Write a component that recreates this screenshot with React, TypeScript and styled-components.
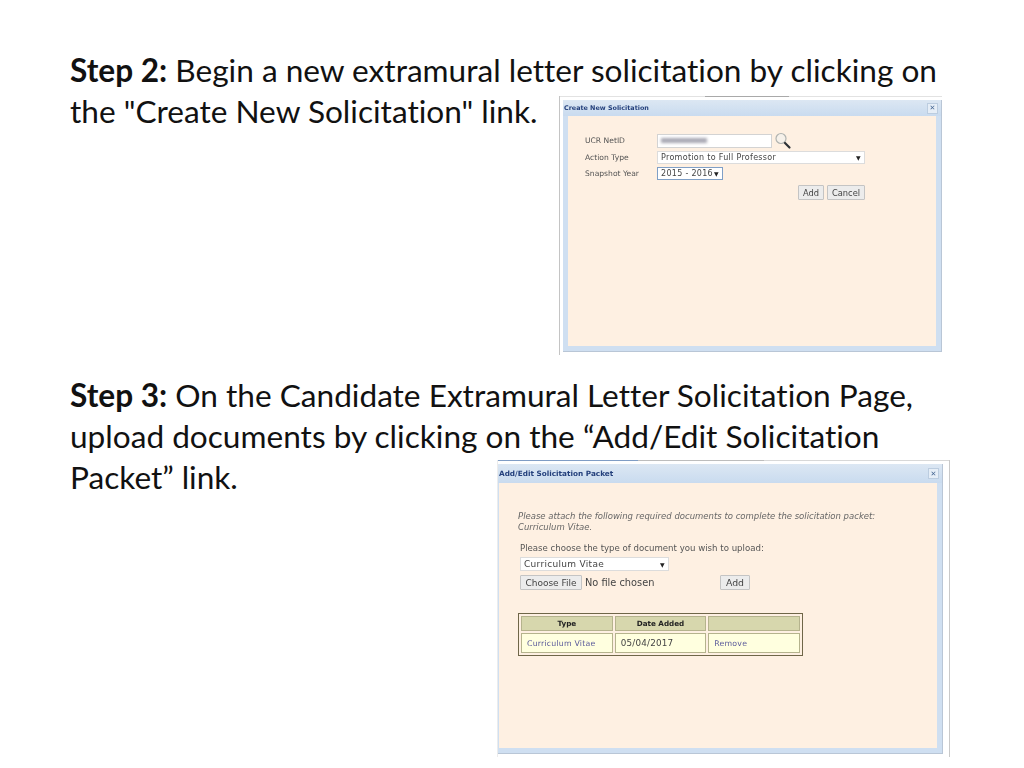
import React from "react";
import styled, { createGlobalStyle } from "styled-components";

const Global = createGlobalStyle`
  html, body {
    margin: 0;
    padding: 0;
    background: #fff;
  }
`;

const SearchIcon = () => (
  <svg width="18" height="18" viewBox="0 0 18 18">
    <circle cx="7" cy="6.5" r="5" fill="#f6f1ea" stroke="#b0b3b0" strokeWidth="1.2" />
    <path d="M11 11 L15.5 15.5" stroke="#2c3136" strokeWidth="2.2" strokeLinecap="round" />
  </svg>
);

const App = () => {
  return (
    <Page>
      <Global />
      <Section>
        <Line>
          <b>Step 2:</b> Begin a new extramural letter solicitation by clicking on
        </Line>
        <Row>
          <Line>the "Create New Solicitation" link.</Line>
          <Frame
            $right={81}
            $w={384}
            $top={5}
            $rule="linear-gradient(90deg, #e2e2e2 0 38%, #a9a9a9 38% 60%, #e2e2e2 60% 100%)"
          >
            <Window $h={252} $w={379} $ml={3}>
              <Header $h={16}>
                <Title $size={6.4}>Create New Solicitation</Title>
                <Close>✕</Close>
              </Header>
              <Body $left={5} $right={5}>
                <Form>
                  <Label>UCR NetID</Label>
                  <SearchRow>
                    <NetInput>
                      <Redacted />
                    </NetInput>
                    <SearchIcon />
                  </SearchRow>
                  <Label>Action Type</Label>
                  <Select $w={208}>
                    Promotion to Full Professor<Arrow>▼</Arrow>
                  </Select>
                  <Label>Snapshot Year</Label>
                  <Select $w={66} $focus>
                    2015 - 2016<Arrow>▼</Arrow>
                  </Select>
                </Form>
                <Buttons>
                  <Btn $w={26} $size={8.3}>Add</Btn>
                  <Btn $w={38} $size={8.3}>Cancel</Btn>
                </Buttons>
              </Body>
            </Window>
          </Frame>
        </Row>
      </Section>
      <Section $top={20}>
        <Line>
          <b>Step 3:</b> On the Candidate Extramural Letter Solicitation Page,
        </Line>
        <Line>upload documents by clicking on the “Add/Edit Solicitation</Line>
        <Row>
          <Line>Packet” link.</Line>
          <Frame
            $right={74}
            $w={453}
            $top={3}
            $closed
            $rule="linear-gradient(90deg, #7f9cc4 0 31%, #bdbdbd 31% 59%, #d8d8d8 59% 100%)"
          >
            <Window $h={290} $w={445} $ml={0}>
              <Header $h={19}>
                <Title $size={7.3}>Add/Edit Solicitation Packet</Title>
                <Close>✕</Close>
              </Header>
              <Body $left={1} $right={5}>
                <Packet>
                  <Note>
                    Please attach the following required documents to complete the solicitation packet:
                    <br />
                    Curriculum Vitae.
                  </Note>
                  <Upload>
                    <UploadLabel>Please choose the type of document you wish to upload:</UploadLabel>
                    <Select $w={149}>
                      Curriculum Vitae<Arrow>▼</Arrow>
                    </Select>
                    <FileRow>
                      <Btn $w={62} $size={9}>Choose File</Btn>
                      <FileName>No file chosen</FileName>
                      <Btn $w={30} $size={9.3}>Add</Btn>
                    </FileRow>
                  </Upload>
                  <DocTable>
                    <thead>
                      <tr>
                        <Th>Type</Th>
                        <Th>Date Added</Th>
                        <Th />
                      </tr>
                    </thead>
                    <tbody>
                      <tr>
                        <Td $link>Curriculum Vitae</Td>
                        <Td>05/04/2017</Td>
                        <Td $link>Remove</Td>
                      </tr>
                    </tbody>
                  </DocTable>
                </Packet>
              </Body>
            </Window>
          </Frame>
        </Row>
      </Section>
    </Page>
  );
};

export default App;

const Page = styled.div`
  width: 1024px;
  height: 768px;
  box-sizing: border-box;
  padding: 50px 0 0 70px;
  overflow: hidden;
  color: #111;
  font-family: "Lato", "Liberation Sans", sans-serif;
`;

const Section = styled.section<{ $top?: number }>`
  margin-top: ${({ $top }) => $top || 0}px;
`;

const Line = styled.div`
  font-size: 31.6px;
  line-height: 41px;
  font-variant-ligatures: none;
  white-space: nowrap;

  b {
    font-weight: 700;
  }
`;

const Row = styled.div`
  display: flex;
  justify-content: space-between;
  align-items: flex-start;
`;

const Frame = styled.div<{ $right: number; $w: number; $top: number; $closed?: boolean; $rule: string }>`
  width: ${({ $w }) => $w}px;
  margin-top: ${({ $top }) => $top}px;
  margin-right: ${({ $right }) => $right}px;
  padding: 4px 0 3px;
  box-sizing: border-box;
  background: ${({ $rule }) => $rule} top / 100% 1px no-repeat;
  border-left: 1px solid ${({ $closed }) => ($closed ? "#ececec" : "#c4c4c4")};
  border-right: 1px solid ${({ $closed }) => ($closed ? "#c9c9c9" : "transparent")};
  filter: blur(0.45px);
  font-family: "DejaVu Sans", "Liberation Sans", sans-serif;
`;

const Window = styled.div<{ $h: number; $w: number; $ml: number }>`
  width: ${({ $w }) => $w}px;
  height: ${({ $h }) => $h}px;
  margin-left: ${({ $ml }) => $ml}px;
  display: flex;
  flex-direction: column;
  box-sizing: border-box;
  background: #cfdff1;
  border-right: 1px solid #b9c6d6;
  border-bottom: 1px solid #b9c6d6;
`;

const Header = styled.div<{ $h: number }>`
  height: ${({ $h }) => $h}px;
  flex: none;
  display: flex;
  align-items: center;
  justify-content: space-between;
  padding: 0 3px 0 1px;
  background: linear-gradient(#dce7f3, #c9dbef);
`;

const Title = styled.div<{ $size: number }>`
  font-size: ${({ $size }) => $size}px;
  font-weight: 700;
  color: #24407c;
`;

const Close = styled.div`
  width: 9px;
  height: 9px;
  display: flex;
  align-items: center;
  justify-content: center;
  font-size: 7px;
  font-weight: 700;
  color: #4a6a96;
  background: #e6eef7;
  border: 1px solid #bccde0;
`;

const Body = styled.div<{ $left: number; $right: number }>`
  flex: 1;
  margin: 0 ${({ $right }) => $right}px 5px ${({ $left }) => $left}px;
  background: #fef0e2;
  font-size: 8px;
  color: #444;
`;

const Form = styled.div`
  display: grid;
  grid-template-columns: 72px 208px;
  align-items: center;
  justify-items: start;
  row-gap: 3px;
  margin: 17px 0 0 17px;
`;

const Label = styled.div`
  font-size: 7.6px;
  color: #555;
  white-space: nowrap;
`;

const UploadLabel = styled.div`
  font-size: 8.6px;
  color: #555;
  white-space: nowrap;
`;

const SearchRow = styled.div`
  display: flex;
  align-items: center;
  gap: 2px;
  height: 15px;
`;

const NetInput = styled.div`
  width: 115px;
  height: 14px;
  box-sizing: border-box;
  display: flex;
  align-items: center;
  padding-left: 3px;
  background: #fff;
  border: 1px solid #d3d3d3;
`;

const Redacted = styled.span`
  width: 46px;
  height: 5px;
  background: #a8a8b4;
  filter: blur(1.5px);
`;

const Select = styled.div<{ $w: number; $focus?: boolean }>`
  width: ${({ $w }) => $w}px;
  height: 13px;
  box-sizing: border-box;
  display: flex;
  align-items: center;
  justify-content: space-between;
  padding: 0 3px;
  font-size: 8px;
  letter-spacing: 0.3px;
  white-space: nowrap;
  color: #444;
  background: #fff;
  border: 1px solid ${({ $focus }) => ($focus ? "#7f9fc6" : "#dcdcdc")};
`;

const Arrow = styled.span`
  font-size: 6px;
  color: #222;
`;

const Buttons = styled.div`
  display: flex;
  justify-content: flex-end;
  gap: 3px;
  width: 280px;
  margin: 5px 0 0 17px;
`;

const Btn = styled.div<{ $w: number; $size: number }>`
  width: ${({ $w }) => $w}px;
  height: 15px;
  box-sizing: border-box;
  display: flex;
  align-items: center;
  justify-content: center;
  flex: none;
  font-size: ${({ $size }) => $size}px;
  white-space: nowrap;
  color: #444;
  background: #ececec;
  border: 1px solid #c4c4c4;
  border-radius: 1px;
`;

const Packet = styled.div`
  padding: 28px 0 0 19px;
`;

const Note = styled.div`
  font-size: 8.5px;
  line-height: 10.5px;
  font-style: italic;
  color: #666;
  white-space: nowrap;
`;

const Upload = styled.div`
  margin: 11px 0 0 2px;
  display: flex;
  flex-direction: column;
  align-items: flex-start;

  ${Select} {
    height: 14px;
    margin-top: 4px;
    font-size: 9px;
  }
`;

const FileRow = styled.div`
  display: flex;
  align-items: center;
  margin-top: 4px;
`;

const FileName = styled.div`
  width: 135px;
  padding-left: 3px;
  box-sizing: content-box;
  font-size: 9.8px;
  color: #444;
  white-space: nowrap;
`;

const DocTable = styled.table`
  width: 285px;
  margin-top: 23px;
  box-sizing: border-box;
  table-layout: fixed;
  border-collapse: separate;
  border-spacing: 2px;
  background: #fef0e2;
  border: 1px solid #6f6648;
`;

const Th = styled.th`
  height: 13px;
  padding: 0;
  font-size: 7.2px;
  color: #222;
  background: #d7d7ad;
  border: 1px solid #b5b38d;
`;

const Td = styled.td<{ $link?: boolean }>`
  height: 18px;
  padding: 0 0 0 5px;
  font-size: ${({ $link }) => ($link ? 7.8 : 8.8)}px;
  letter-spacing: 0.2px;
  white-space: nowrap;
  color: ${({ $link }) => ($link ? "#5a5a9a" : "#444")};
  background: #ffffdf;
  border: 1px solid #b5b38d;
`;
